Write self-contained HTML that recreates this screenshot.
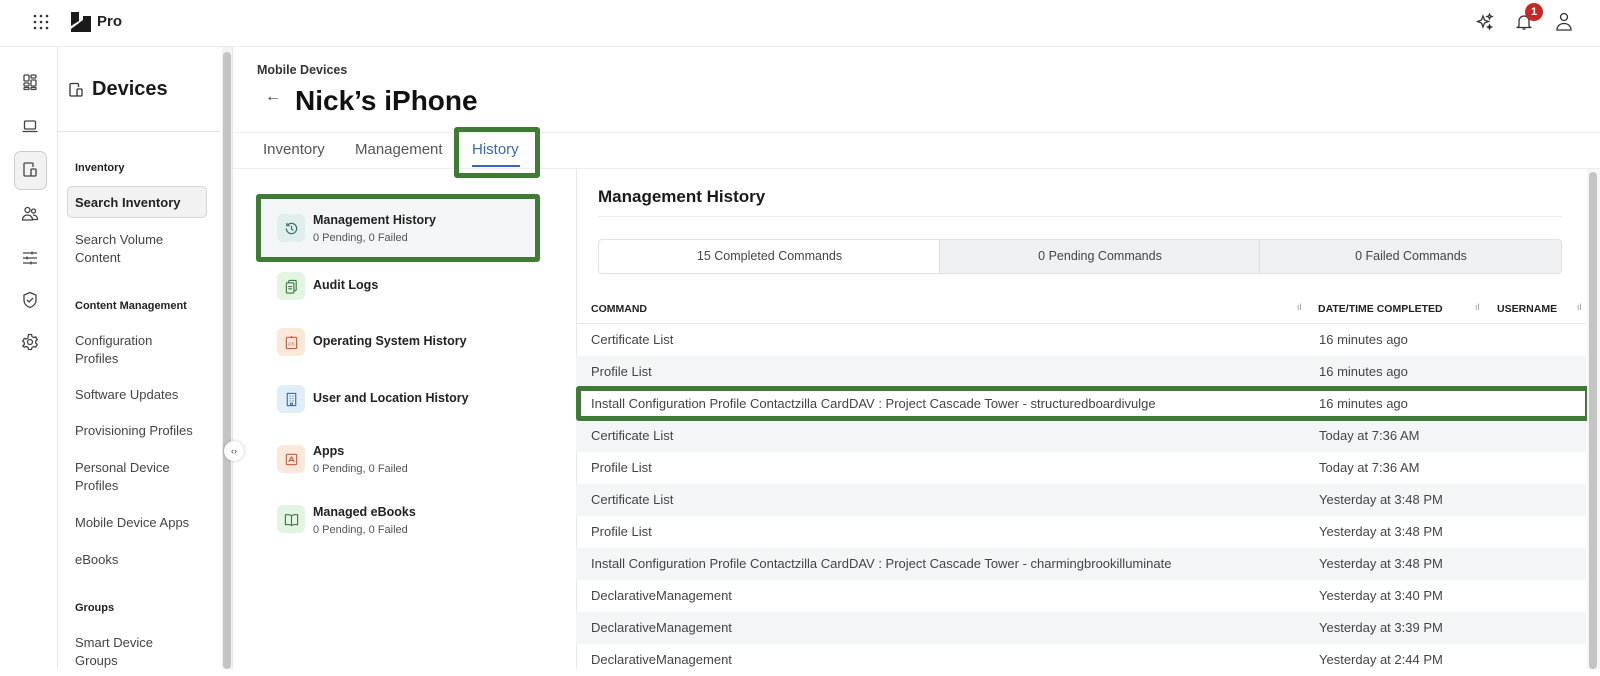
<!DOCTYPE html>
<html><head><meta charset="utf-8"><style>
*{box-sizing:border-box;margin:0;padding:0}
body{width:1600px;height:669px;overflow:hidden;background:#fff;font-family:"Liberation Sans",sans-serif;color:#222;position:relative}
.a{position:absolute}
.t{position:absolute;white-space:nowrap}
.ic{position:absolute;width:18px;height:18px}
.g{position:absolute;border:5px solid #3f7a36;border-radius:3px}
.nav{font-size:13px;color:#444;line-height:18px}
.sec{font-size:11px;font-weight:bold;color:#222}
.item .ib{position:absolute;left:277px;width:28px;height:28px;border-radius:6px}
.row{position:absolute;left:576px;width:1010px;height:32px;font-size:13px;color:#444}
.row span{position:absolute;top:8px}
</style></head><body>
<!-- top bar -->
<div class="a" style="left:0;top:46px;width:1600px;height:1px;background:#ececec"></div>
<svg class="a" style="left:33px;top:14px" width="16" height="16" viewBox="0 0 16 16" fill="#333"><circle cx="2" cy="2" r="1.3"/><circle cx="8" cy="2" r="1.3"/><circle cx="14" cy="2" r="1.3"/><circle cx="2" cy="8" r="1.3"/><circle cx="8" cy="8" r="1.3"/><circle cx="14" cy="8" r="1.3"/><circle cx="2" cy="14" r="1.3"/><circle cx="8" cy="14" r="1.3"/><circle cx="14" cy="14" r="1.3"/></svg>
<svg class="a" style="left:71px;top:12px" width="20" height="20" viewBox="0 0 20 20" fill="#1a1a1a"><path d="M0 0h8v9L0 14z"/><path d="M20 4v16H0l0-3L12 8V4z"/></svg>
<div class="t" style="left:97px;top:13px;font-size:15px;font-weight:bold">Pro</div>
<svg class="a" style="left:1476px;top:13px" width="18" height="18" viewBox="0 0 18 18" fill="none" stroke="#333" stroke-width="1.3"><path d="M7 3l1.5 4 4 1.5-4 1.5L7 14l-1.5-4-4-1.5 4-1.5z"/><path d="M13.5 1l.7 1.8 1.8.7-1.8.7-.7 1.8-.7-1.8-1.8-.7 1.8-.7z"/><path d="M13.5 12l.6 1.4 1.4.6-1.4.6-.6 1.4-.6-1.4-1.4-.6 1.4-.6z" fill="#333"/></svg>
<svg class="a" style="left:1515px;top:13px" width="18" height="18" viewBox="0 0 18 18" fill="none" stroke="#333" stroke-width="1.3"><path d="M4 13V8a5 5 0 0110 0v5l1.5 1.5h-13z"/><path d="M7.5 16h3"/></svg>
<div class="a" style="left:1525px;top:3px;width:18px;height:18px;border-radius:50%;background:#c62828;color:#fff;font-size:11px;font-weight:bold;text-align:center;line-height:18px">1</div>
<svg class="a" style="left:1555px;top:12px" width="18" height="20" viewBox="0 0 18 20" fill="none" stroke="#333" stroke-width="1.3"><circle cx="9" cy="5" r="3.5"/><path d="M2 18c0-4 3-6.5 7-6.5s7 2.5 7 6.5z"/></svg>

<!-- rail -->
<div class="a" style="left:57px;top:47px;width:1px;height:622px;background:#e8e8e8"></div>
<div class="a" style="left:14px;top:151px;width:33px;height:39px;border:1px solid #ccc;border-radius:7px;background:#f2f2f2"></div>
<svg class="ic" style="left:21px;top:73px" viewBox="0 0 18 18" fill="none" stroke="#444" stroke-width="1.3"><rect x="3" y="2" width="5" height="6" rx="1"/><rect x="10" y="2" width="5" height="3" rx="1"/><rect x="3" y="10" width="5" height="3" rx="1"/><rect x="10" y="7" width="5" height="6" rx="1"/><rect x="3" y="14.5" width="5" height="2" rx=".5"/><rect x="10" y="14.5" width="5" height="2" rx=".5"/></svg>
<svg class="ic" style="left:21px;top:117px" viewBox="0 0 18 18" fill="none" stroke="#444" stroke-width="1.3"><rect x="3.5" y="4" width="11" height="8" rx="1"/><path d="M1.5 14.5h15"/></svg>
<svg class="ic" style="left:21px;top:161px" viewBox="0 0 18 18" fill="none" stroke="#444" stroke-width="1.3"><path d="M10 15H4a1 1 0 01-1-1V3a1 1 0 011-1h7a1 1 0 011 1v3"/><rect x="10" y="8" width="5" height="7" rx="1"/></svg>
<svg class="ic" style="left:21px;top:205px" viewBox="0 0 18 18" fill="none" stroke="#444" stroke-width="1.3"><circle cx="6.5" cy="5" r="2.5"/><circle cx="12.5" cy="6" r="2"/><path d="M1.5 15c0-3 2-5 5-5s5 2 5 5z"/><path d="M12 10c3 0 4.5 2 4.5 4.5H12"/></svg>
<svg class="ic" style="left:21px;top:249px" viewBox="0 0 18 18" fill="none" stroke="#444" stroke-width="1.3"><path d="M2 4h14M2 9h14M2 14h14"/><path d="M11 2.5v3M6 7.5v3M10 12.5v3"/></svg>
<svg class="ic" style="left:21px;top:291px" viewBox="0 0 18 18" fill="none" stroke="#444" stroke-width="1.3"><path d="M9 1.5l6 2.5v5c0 4-3 6.5-6 7.5-3-1-6-3.5-6-7.5V4z"/><path d="M6 9l2 2 4-4"/></svg>
<svg class="ic" style="left:21px;top:333px" viewBox="0 0 18 18" fill="none" stroke="#444" stroke-width="1.3"><circle cx="9" cy="9" r="2.5"/><path d="M7.5 1.5h3l.5 2 1.7 1 2-.6 1.5 2.6-1.5 1.5v2l1.5 1.5-1.5 2.6-2-.6-1.7 1-.5 2h-3l-.5-2-1.7-1-2 .6L1.8 13l1.5-1.5v-2L1.8 8l1.5-2.6 2 .6 1.7-1z"/></svg>

<!-- sidebar -->
<svg class="a" style="left:68px;top:82px" width="16" height="16" viewBox="0 0 16 16" fill="none" stroke="#333" stroke-width="1.3"><path d="M9 14H3a1 1 0 01-1-1V2.5a1 1 0 011-1h6.5a1 1 0 011 1V5"/><rect x="9" y="7" width="5" height="7" rx="1"/></svg>
<div class="t" style="left:92px;top:78px;font-size:20px;font-weight:bold;color:#1a1a1a">Devices</div>
<div class="a" style="left:58px;top:131px;width:162px;height:1px;background:#e6e6e6"></div>
<div class="a" style="left:222px;top:47px;width:10px;height:622px;background:#f3f3f3"></div>
<div class="a" style="left:223px;top:52px;width:8px;height:617px;border-radius:4px;background:#c4c4c4"></div>
<div class="a" style="left:232px;top:47px;width:1px;height:622px;background:#e8e8e8"></div>
<div class="a" style="left:224px;top:441px;width:20px;height:20px;border-radius:50%;background:#fff;box-shadow:0 0 3px rgba(0,0,0,.25);font-size:9px;text-align:center;line-height:20px;color:#333">‹›</div>
<div class="t sec" style="left:75px;top:162px">Inventory</div>
<div class="a" style="left:67px;top:186px;width:140px;height:32px;border:1px solid #d6d6d6;border-radius:5px;background:#f2f2f2"></div>
<div class="t" style="left:75px;top:195px;font-size:13px;font-weight:bold;color:#222">Search Inventory</div>
<div class="a nav" style="left:75px;top:231px">Search Volume<br>Content</div>
<div class="t sec" style="left:75px;top:300px">Content Management</div>
<div class="a nav" style="left:75px;top:332px">Configuration<br>Profiles</div>
<div class="t nav" style="left:75px;top:386px">Software Updates</div>
<div class="t nav" style="left:75px;top:422px">Provisioning Profiles</div>
<div class="a nav" style="left:75px;top:459px">Personal Device<br>Profiles</div>
<div class="t nav" style="left:75px;top:514px">Mobile Device Apps</div>
<div class="t nav" style="left:75px;top:551px">eBooks</div>
<div class="t sec" style="left:75px;top:602px">Groups</div>
<div class="a nav" style="left:75px;top:634px">Smart Device<br>Groups</div>

<!-- header -->
<div class="t" style="left:257px;top:63px;font-size:12.5px;font-weight:bold;color:#333">Mobile Devices</div>
<div class="t" style="left:265px;top:88px;font-size:16px;color:#444">←</div>
<div class="t" style="left:295px;top:85px;font-size:28px;font-weight:bold;color:#111">Nick’s iPhone</div>
<div class="a" style="left:233px;top:132px;width:1367px;height:1px;background:#eee"></div>
<div class="a" style="left:233px;top:168px;width:1367px;height:1px;background:#eee"></div>
<div class="t" style="left:263px;top:141px;font-size:15px;color:#555">Inventory</div>
<div class="t" style="left:355px;top:141px;font-size:15px;color:#555">Management</div>
<div class="t" style="left:472px;top:141px;font-size:15px;color:#3a68b5">History</div>
<div class="a" style="left:472px;top:165px;width:48px;height:2px;background:#3a68b5"></div>
<div class="g" style="left:454px;top:127px;width:86px;height:51px"></div>

<!-- left list -->
<div class="a" style="left:576px;top:169px;width:1px;height:500px;background:#e8e8e8"></div>
<div class="a" style="left:261px;top:199px;width:274px;height:58px;background:#f2f6f6"></div>
<div class="g" style="left:256px;top:194px;width:284px;height:68px"></div>
<div class="item">
<div class="ib" style="top:214px;background:#deefee"></div>
<svg class="a" style="left:284px;top:221px" width="15" height="15" viewBox="0 0 16 16" fill="none" stroke="#3d6b64" stroke-width="1.3"><path d="M2.5 8a5.5 5.5 0 101.6-3.9"/><path d="M3 2v3h3"/><path d="M8 5v3.5l2 1.5"/></svg>
<div class="t" style="left:313px;top:213px;font-size:12.5px;font-weight:bold">Management History</div>
<div class="t" style="left:313px;top:232px;font-size:11px;color:#555">0 Pending, 0 Failed</div>

<div class="ib" style="top:272px;background:#e2f4e2"></div>
<svg class="a" style="left:284px;top:279px" width="15" height="15" viewBox="0 0 16 16" fill="none" stroke="#3d7a3d" stroke-width="1.2"><rect x="5" y="1.5" width="8" height="11" rx="1"/><rect x="2.5" y="4" width="8" height="11" rx="1" fill="#e2f4e2"/><path d="M4.5 8h4M4.5 10.5h4"/></svg>
<div class="t" style="left:313px;top:278px;font-size:12.5px;font-weight:bold">Audit Logs</div>

<div class="ib" style="top:328px;background:#fbe8da"></div>
<svg class="a" style="left:284px;top:335px" width="15" height="15" viewBox="0 0 16 16" fill="none" stroke="#c0603a" stroke-width="1.2"><rect x="2.5" y="2.5" width="11" height="12" rx="1"/><path d="M8 1v2.5"/><text x="4.3" y="11" font-size="5" fill="#c0603a" stroke="none" font-family="Liberation Sans">OS</text></svg>
<div class="t" style="left:313px;top:334px;font-size:12.5px;font-weight:bold">Operating System History</div>

<div class="ib" style="top:385px;background:#e1eef8"></div>
<svg class="a" style="left:284px;top:392px" width="15" height="15" viewBox="0 0 16 16" fill="none" stroke="#3a6ea5" stroke-width="1.2"><rect x="3.5" y="1.5" width="9" height="13"/><path d="M6 4.5h1M9 4.5h1M6 7h1M9 7h1M6 9.5h1M9 9.5h1M7 14.5v-2.5h2v2.5"/></svg>
<div class="t" style="left:313px;top:391px;font-size:12.5px;font-weight:bold">User and Location History</div>

<div class="ib" style="top:445px;background:#fbe8da"></div>
<svg class="a" style="left:284px;top:452px" width="15" height="15" viewBox="0 0 16 16" fill="none" stroke="#c0603a" stroke-width="1.2"><rect x="2.5" y="2.5" width="11" height="11" rx="1"/><path d="M8 5l-3 5.5M8 5l3 5.5M5.5 9h5"/></svg>
<div class="t" style="left:313px;top:444px;font-size:12.5px;font-weight:bold">Apps</div>
<div class="t" style="left:313px;top:463px;font-size:11px;color:#555">0 Pending, 0 Failed</div>

<div class="ib" style="top:505px;background:#e2f4e2"></div>
<svg class="a" style="left:284px;top:512px" width="15" height="15" viewBox="0 0 16 16" fill="none" stroke="#3d7a3d" stroke-width="1.2"><path d="M8 4c-2-1.5-4-1.5-6.5-1v10.5c2.5-.5 4.5-.5 6.5 1 2-1.5 4-1.5 6.5-1V3C12 2.5 10 2.5 8 4zM8 4v10.5"/></svg>
<div class="t" style="left:313px;top:505px;font-size:12.5px;font-weight:bold">Managed eBooks</div>
<div class="t" style="left:313px;top:524px;font-size:11px;color:#555">0 Pending, 0 Failed</div>
</div>

<!-- right panel -->
<div class="t" style="left:598px;top:187px;font-size:17px;font-weight:bold;color:#1a1a1a">Management History</div>
<div class="a" style="left:598px;top:216px;width:964px;height:1px;background:#ebebeb"></div>
<div class="a" style="left:598px;top:239px;width:964px;height:35px;border:1px solid #e2e2e2;border-radius:4px;background:#eef0f1;overflow:hidden">
 <div class="a" style="left:0;top:0;width:341px;height:33px;background:#fff;border-right:1px solid #e2e2e2"></div>
 <div class="a" style="left:660px;top:0;width:1px;height:33px;background:#e0e0e0"></div>
 <div class="t" style="left:0;width:341px;top:9px;text-align:center;font-size:12.5px;color:#444">15 Completed Commands</div>
 <div class="t" style="left:341px;width:320px;top:9px;text-align:center;font-size:12.5px;color:#444">0 Pending Commands</div>
 <div class="t" style="left:661px;width:302px;top:9px;text-align:center;font-size:12.5px;color:#444">0 Failed Commands</div>
</div>
<div class="t" style="left:591px;top:303px;font-size:10.5px;font-weight:bold;color:#222">COMMAND</div>
<div class="t" style="left:1318px;top:303px;font-size:10.5px;font-weight:bold;color:#222">DATE/TIME COMPLETED</div>
<div class="t" style="left:1497px;top:303px;font-size:10.5px;font-weight:bold;color:#222">USERNAME</div>
<div class="t" style="left:1297px;top:302px;font-size:9px;color:#999">ıl</div>
<div class="t" style="left:1475px;top:302px;font-size:9px;color:#999">ıl</div>
<div class="t" style="left:1577px;top:302px;font-size:9px;color:#999">ıl</div>
<div class="a" style="left:576px;top:323px;width:1010px;height:1px;background:#e8e8e8"></div>

<div class="row" style="top:324px"><span style="left:15px">Certificate List</span><span style="left:743px">16 minutes ago</span></div>
<div class="row" style="top:356px;background:#f3f6f6"><span style="left:15px">Profile List</span><span style="left:743px">16 minutes ago</span></div>
<div class="row" style="top:388px"><span style="left:15px">Install Configuration Profile Contactzilla CardDAV : Project Cascade Tower - structuredboardivulge</span><span style="left:743px">16 minutes ago</span></div>
<div class="row" style="top:420px;background:#f3f6f6"><span style="left:15px">Certificate List</span><span style="left:743px">Today at 7:36 AM</span></div>
<div class="row" style="top:452px"><span style="left:15px">Profile List</span><span style="left:743px">Today at 7:36 AM</span></div>
<div class="row" style="top:484px;background:#f3f6f6"><span style="left:15px">Certificate List</span><span style="left:743px">Yesterday at 3:48 PM</span></div>
<div class="row" style="top:516px"><span style="left:15px">Profile List</span><span style="left:743px">Yesterday at 3:48 PM</span></div>
<div class="row" style="top:548px;background:#f3f6f6"><span style="left:15px">Install Configuration Profile Contactzilla CardDAV : Project Cascade Tower - charmingbrookilluminate</span><span style="left:743px">Yesterday at 3:48 PM</span></div>
<div class="row" style="top:580px"><span style="left:15px">DeclarativeManagement</span><span style="left:743px">Yesterday at 3:40 PM</span></div>
<div class="row" style="top:612px;background:#f3f6f6"><span style="left:15px">DeclarativeManagement</span><span style="left:743px">Yesterday at 3:39 PM</span></div>
<div class="row" style="top:644px"><span style="left:15px">DeclarativeManagement</span><span style="left:743px">Yesterday at 2:44 PM</span></div>
<div class="g" style="left:576px;top:386px;width:1014px;height:35px"></div>

<div class="a" style="left:1587px;top:169px;width:13px;height:500px;background:#f6f6f6"></div>
<div class="a" style="left:1589px;top:172px;width:8px;height:497px;border-radius:4px;background:#c4c4c4"></div>
</body></html>
